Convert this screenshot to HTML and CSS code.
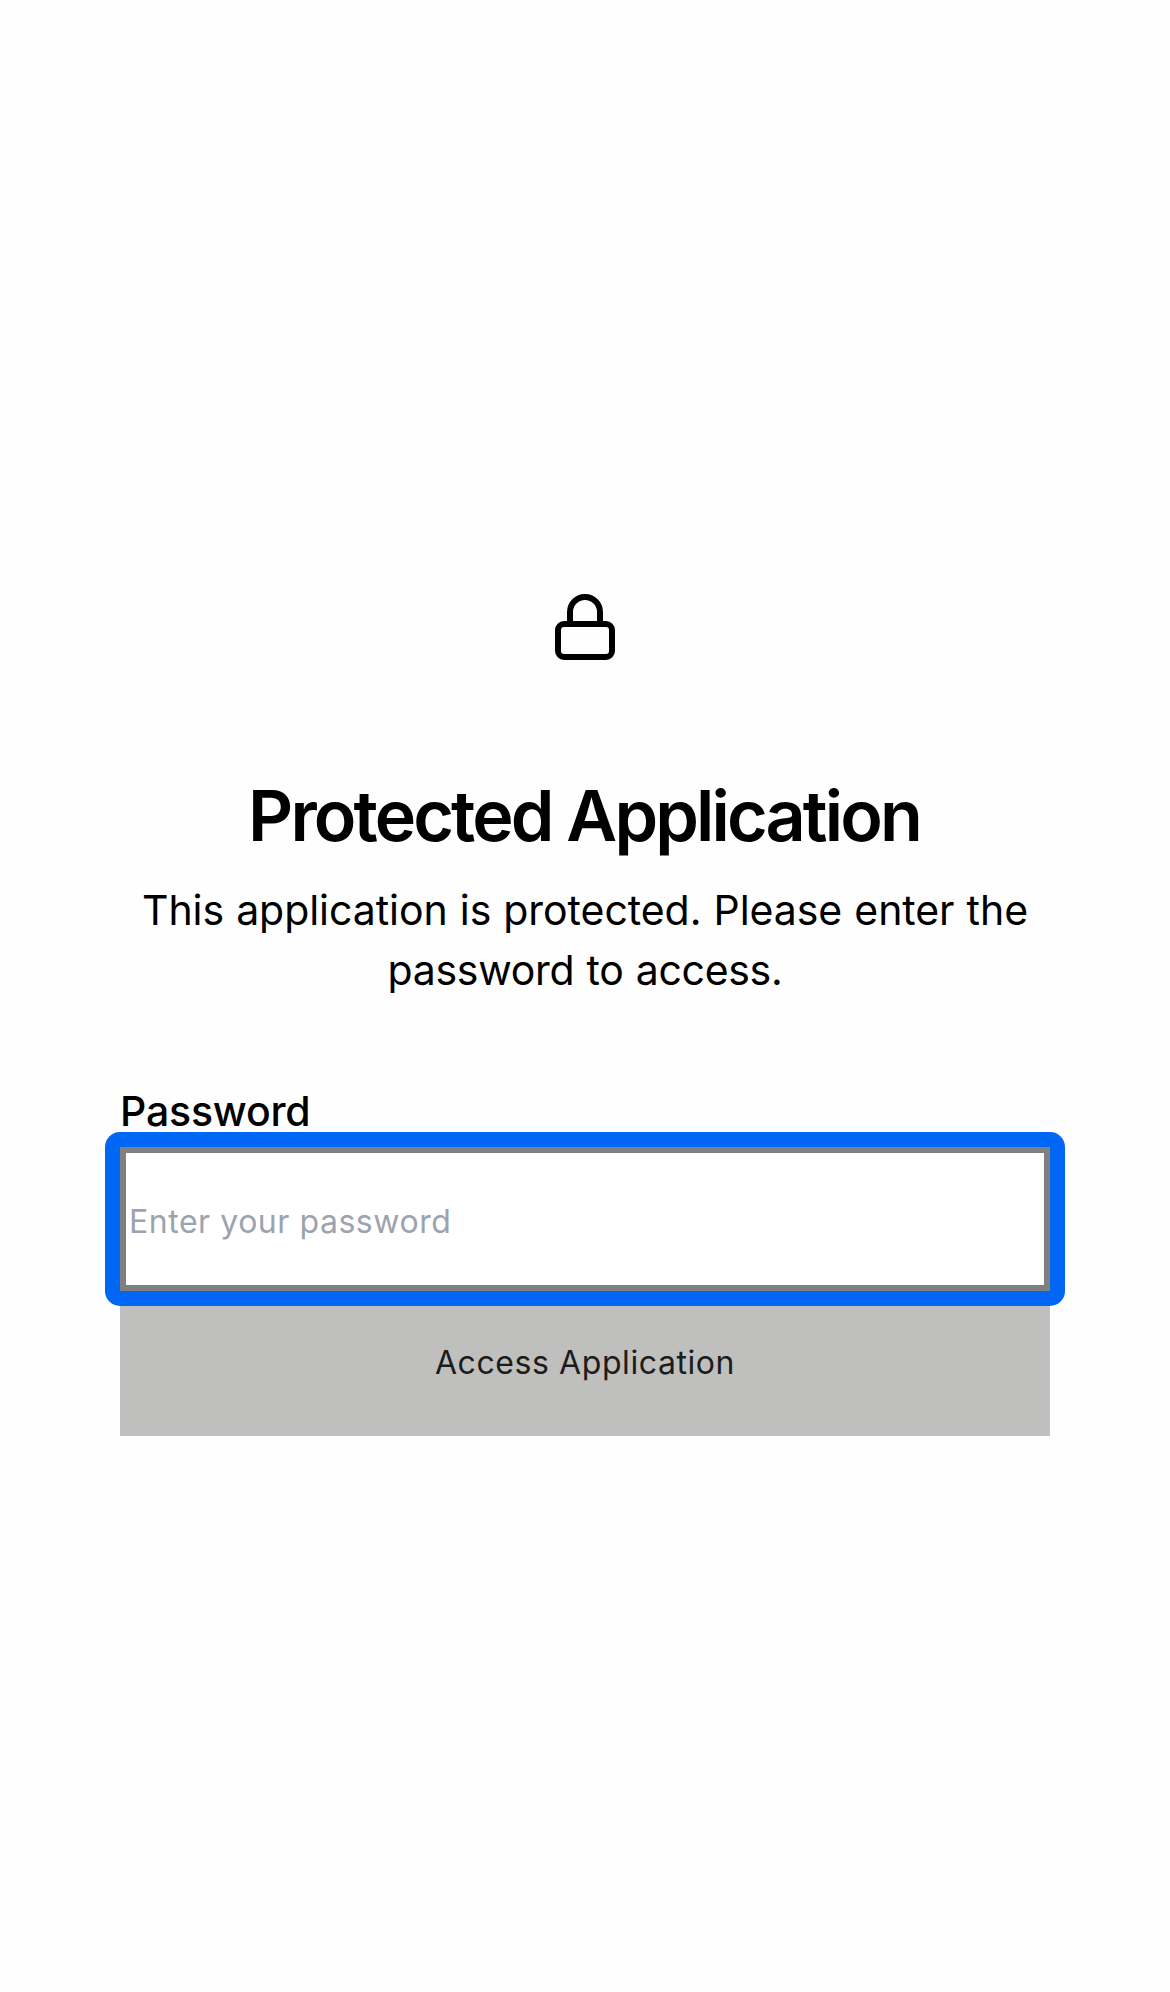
FILE: index.html
```html
<!DOCTYPE html>
<html lang="en">
<head>
<meta charset="utf-8">
<title>Protected Application</title>
<link rel="stylesheet" href="styles.css">
</head>
<body>
<main class="page">
  <header class="intro">
    <svg class="lock" viewBox="0 0 24 24" aria-hidden="true"><rect x="3" y="11" width="18" height="11" rx="2"/><path d="M7 11V7a5 5 0 0 1 10 0v4"/></svg>
    <h1 class="title">Protected Application</h1>
    <p class="description"><span class="line">This application is protected. Please enter the</span> <span class="line line-last">password to access.</span></p>
  </header>
  <form class="form">
    <label class="label" for="password">Password</label>
    <div class="focus-ring"><input class="input" id="password" type="password" placeholder="Enter your password"></div>
    <button class="submit" type="button" disabled>Access Application</button>
  </form>
</main>
</body>
</html>
```
FILE: styles.css
```css
* { box-sizing: border-box; }
body {
  margin: 0;
  min-height: 1992px;
  background: #fefefe;
  color: #000;
  font-family: Inter, "Liberation Sans", sans-serif;
}
.page { padding: 588px 120px 0; }
.intro { display: flex; flex-direction: column; align-items: center; text-align: center; }
.lock {
  width: 72px;
  height: 78px;
  fill: none;
  stroke: #000;
  stroke-width: 2;
  stroke-linecap: round;
  stroke-linejoin: round;
}
.title {
  margin: 108px 0 0;
  font-size: 70px;
  line-height: 84px;
  font-weight: 600;
  letter-spacing: -2.87px;
  text-indent: -2px;
  white-space: nowrap;
}
.description { margin: 22px 0 0; font-size: 41px; line-height: 60px; }
.line { display: block; white-space: nowrap; letter-spacing: -.05px; word-spacing: .6px; }
.line-last { letter-spacing: -.3px; word-spacing: 1px; }
.form { display: flex; flex-direction: column; margin-top: 90px; }
.label {
  font-size: 41px;
  line-height: 42px;
  font-weight: 500;
  letter-spacing: -.2px;
}
/* Rounded ring around the square-cornered field */
.focus-ring {
  position: relative;
  display: flex;
  margin: 0 -15px -15px;
  padding: 15px;
  border-radius: 15px;
  background: #0067f4;
}
.input {
  width: 100%;
  height: 144px;
  margin: 0;
  padding: 4px 3px 0;
  border: 6px solid #808080;
  border-radius: 0;
  outline: 0;
  background: #fff;
  font: 400 32px Inter, "Liberation Sans", sans-serif;
  letter-spacing: .54px;
}
.input::placeholder { color: #9ca3af; opacity: 1; }
.submit {
  height: 145px;
  padding: 0 0 2px;
  border: solid #bfc1c0;
  border-width: 0 6px;
  background: #bfbfbd;
  color: #1c1c1c;
  font: 400 32px Inter, "Liberation Sans", sans-serif;
  letter-spacing: .58px;
}
```
